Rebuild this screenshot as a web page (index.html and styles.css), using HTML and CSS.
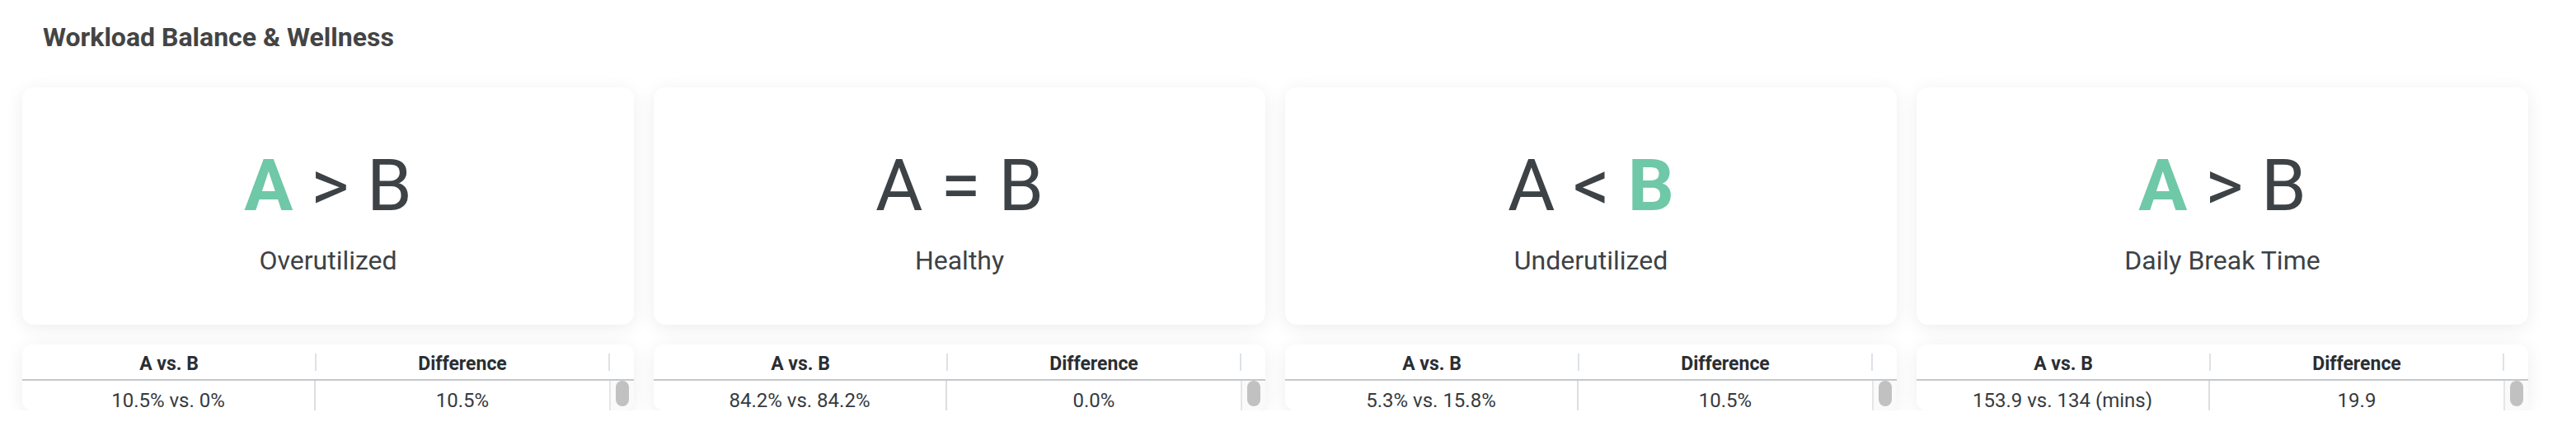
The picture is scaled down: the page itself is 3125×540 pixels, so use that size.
FILE: index.html
```html
<!DOCTYPE html>
<html lang="en">
<head>
<meta charset="utf-8">
<title>Workload Balance &amp; Wellness</title>
<link rel="stylesheet" href="styles.css">
</head>
<body>
<section class="section">
  <h2 class="section-title">Workload Balance &amp; Wellness</h2>
  <div class="grid">
    <div class="col">
      <div class="card">
        <div class="compare"><span class="hl">A</span> &gt; B</div>
        <div class="label">Overutilized</div>
      </div>
      <div class="table">
        <div class="thead">
          <div class="th sep">A vs. B</div>
          <div class="th sep">Difference</div>
          <div class="th"></div>
        </div>
        <div class="tbody">
          <div class="td sep">10.5% vs. 0%</div>
          <div class="td">10.5%</div>
          <div class="scroll"><div class="thumb"></div></div>
        </div>
      </div>
    </div>
    <div class="col">
      <div class="card">
        <div class="compare">A = B</div>
        <div class="label">Healthy</div>
      </div>
      <div class="table">
        <div class="thead">
          <div class="th sep">A vs. B</div>
          <div class="th sep">Difference</div>
          <div class="th"></div>
        </div>
        <div class="tbody">
          <div class="td sep">84.2% vs. 84.2%</div>
          <div class="td">0.0%</div>
          <div class="scroll"><div class="thumb"></div></div>
        </div>
      </div>
    </div>
    <div class="col">
      <div class="card">
        <div class="compare">A &lt; <span class="hl">B</span></div>
        <div class="label">Underutilized</div>
      </div>
      <div class="table">
        <div class="thead">
          <div class="th sep">A vs. B</div>
          <div class="th sep">Difference</div>
          <div class="th"></div>
        </div>
        <div class="tbody">
          <div class="td sep">5.3% vs. 15.8%</div>
          <div class="td">10.5%</div>
          <div class="scroll"><div class="thumb"></div></div>
        </div>
      </div>
    </div>
    <div class="col">
      <div class="card">
        <div class="compare"><span class="hl">A</span> &gt; B</div>
        <div class="label">Daily Break Time</div>
      </div>
      <div class="table">
        <div class="thead">
          <div class="th sep">A vs. B</div>
          <div class="th sep">Difference</div>
          <div class="th"></div>
        </div>
        <div class="tbody">
          <div class="td sep">153.9 vs. 134 (mins)</div>
          <div class="td">19.9</div>
          <div class="scroll"><div class="thumb"></div></div>
        </div>
      </div>
    </div>
  </div>
</section>
</body>
</html>
```
FILE: styles.css
```css
* { box-sizing: border-box; }
html, body {
  margin: 0;
  padding: 0;
  background: #ffffff;
  font-family: Roboto, "Liberation Sans", Arial, sans-serif;
  overflow: hidden;
}
.section {
  padding: 27px 58px 0 27px;
}
.section-title {
  margin: 0 0 43px 25px;
  font-size: 32px;
  line-height: 36px;
  font-weight: 700;
  color: #444444;
}
.grid {
  display: grid;
  grid-template-columns: repeat(4, 1fr);
  column-gap: 24px;
}
.col {
  display: flex;
  flex-direction: column;
  gap: 24px;
}
.card {
  height: 288px;
  background: #ffffff;
  border-radius: 14px;
  box-shadow: 0 4px 22px rgba(0, 0, 0, 0.075);
  display: flex;
  flex-direction: column;
  align-items: center;
  padding-top: 75px;
  gap: 27px;
  color: #3d4246;
}
.compare {
  font-size: 88px;
  line-height: 88px;
  font-weight: 400;
  white-space: pre;
}
.hl {
  color: #6fc8a8;
  font-weight: 700;
}
.label {
  font-size: 32px;
  line-height: 40px;
}
.table {
  height: 80px;
  background: #ffffff;
  border-radius: 12px;
  box-shadow: 0 4px 22px rgba(0, 0, 0, 0.075);
  overflow: hidden;
}
.thead {
  display: grid;
  grid-template-columns: 1fr 1fr 30px;
  height: 44px;
  border-bottom: 2px solid #c3c8cc;
}
.th {
  position: relative;
  text-align: center;
  font-size: 23px;
  line-height: 42px;
  padding-top: 3px;
  font-weight: 700;
  color: #2a2e33;
}
.th.sep::after {
  content: "";
  position: absolute;
  right: -1px;
  top: 11px;
  width: 2px;
  height: 21px;
  background: #dde2e6;
}
.tbody {
  display: grid;
  grid-template-columns: 1fr 1fr 30px;
  height: 48px;
}
.td {
  text-align: center;
  font-size: 24px;
  line-height: 48px;
  color: #363b40;
}
.td.sep {
  border-right: 2px solid #dedede;
}
.scroll {
  border-left: 2px solid #e6e6e6;
  background: #fafafa;
  padding: 0 4px 0 6px;
}
.thumb {
  width: 16px;
  height: 31px;
  border-radius: 8px;
  background: #c1c1c1;
}
```
